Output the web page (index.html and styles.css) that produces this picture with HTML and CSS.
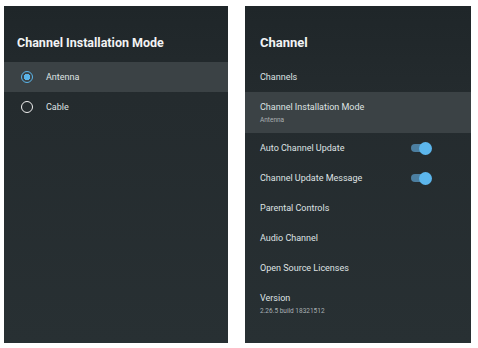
FILE: index.html
```html
<!DOCTYPE html>
<html lang="en">
<head>
    <meta charset="UTF-8">
    <meta name="viewport" content="width=device-width, initial-scale=1.0">
    <title>Channel</title>
    <link rel="stylesheet" href="styles.css">
</head>
<body>
    <div class="panel panel-left">
        <h2 class="panel-title">Channel Installation Mode</h2>
        <div class="option selected">
            <span class="radio"></span>
            <span class="label">Antenna</span>
        </div>
        <div class="option">
            <span class="radio"></span>
            <span class="label">Cable</span>
        </div>
    </div>

    <div class="panel panel-right">
        <h2 class="panel-title">Channel</h2>
        <div class="item">Channels</div>
        <div class="item item-sub selected">
            <span class="label">Channel Installation Mode</span>
            <span class="sub">Antenna</span>
        </div>
        <div class="item">
            <span class="label">Auto Channel Update</span>
            <span class="switch"></span>
        </div>
        <div class="item">
            <span class="label">Channel Update Message</span>
            <span class="switch"></span>
        </div>
        <div class="item">Parental Controls</div>
        <div class="item">Audio Channel</div>
        <div class="item">Open Source Licenses</div>
        <div class="item item-sub">
            <span class="label">Version</span>
            <span class="sub">2.26.5 build 18321512</span>
        </div>
    </div>
</body>
</html>
```

FILE: styles.css
```css
body {
    font-family: Roboto, "Liberation Sans", sans-serif;
    display: flex;
    gap: 17px;
    margin: 0;
    padding: 6px 0 5px 4px;
    height: 348px;
    box-sizing: border-box;
    background-color: #fff;
    color: #dfe2e3;
}
.panel {
    height: 337px;
    background: linear-gradient(#1f2629 0, #242b2e 90px, #283033 100%);
}
.panel-left {
    width: 224px;
}
.panel-right {
    width: 226px;
}
.panel-title {
    margin: 0;
    height: 14px;
    line-height: 14px;
    padding: 30px 0 12px 13px;
    font-size: 12.5px;
    font-weight: 700;
    color: #f2f3f4;
}
.panel-right .panel-title {
    padding-left: 15px;
    font-size: 13px;
}
.selected {
    background-color: #3b4245;
}
.option {
    height: 30px;
    display: flex;
    align-items: center;
    padding-left: 17px;
    font-size: 9px;
}
.option .radio {
    width: 10px;
    height: 10px;
    border: 1.5px solid #f0f0f0;
    border-radius: 50%;
    margin-right: 13px;
    box-sizing: content-box;
}
.option.selected .radio {
    border-color: #5ab4e8;
    background: radial-gradient(circle, #5ab4e8 0, #5ab4e8 3px, transparent 3.5px);
}
.item {
    height: 30px;
    display: flex;
    align-items: center;
    padding: 0 40px 0 15px;
    font-size: 9px;
}
.item .label {
    flex: 1;
}
.item-sub {
    flex-direction: column;
    align-items: flex-start;
    justify-content: center;
    height: 41px;
}
.item-sub .label {
    flex: none;
}
.item-sub .sub {
    font-size: 6.5px;
    color: #aab0b3;
    margin-top: 4px;
}
.switch {
    position: relative;
    width: 20px;
    height: 8px;
    border-radius: 4px;
    background-color: #4c7fa1;
}
.switch::after {
    content: "";
    position: absolute;
    right: -1px;
    top: -2.5px;
    width: 13px;
    height: 13px;
    border-radius: 50%;
    background-color: #5cb6ec;
}
```
